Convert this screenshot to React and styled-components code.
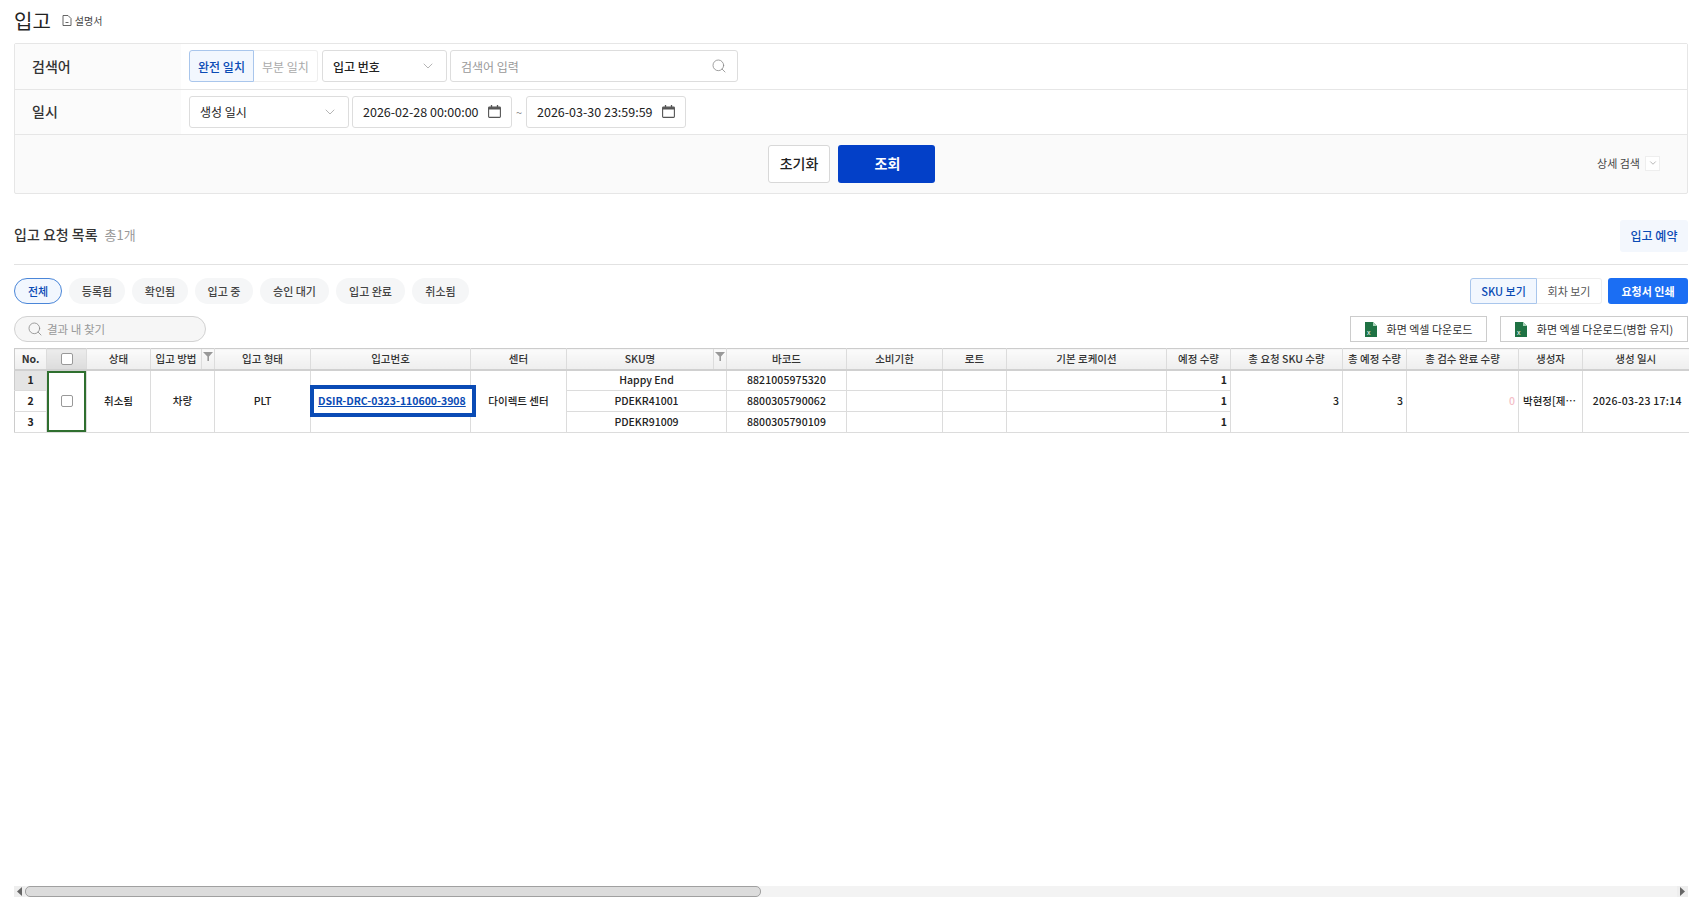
import React from "react";
import styled, { createGlobalStyle } from "styled-components";
import { ChevronDown, Search } from "lucide-react";

const Global = createGlobalStyle`
  html, body { margin: 0; padding: 0; background: #fff; height: 100%; overflow: hidden; }
  * { box-sizing: border-box; }
  body { font-family: "Noto Sans CJK KR", "Noto Sans", sans-serif; color: #222; }
`;

const Page = styled.div`
  height: 901px; width: 1696px; padding: 0 8px 4px 14px;
  display: flex; flex-direction: column;
`;
const TitleRow = styled.div`height: 43px; display: flex; align-items: center; gap: 11px; padding-bottom: 2px;`;
const Title = styled.h1`margin: 0; font-size: 20px; font-weight: 400; color: #222; line-height: 1;`;
const Manual = styled.span`display: flex; align-items: center; gap: 3px; font-size: 10px; color: #444;`;

const Panel = styled.section`border: 1px solid #e6e6e6; border-radius: 2px; height: 151px; display: flex; flex-direction: column; background: #fafafa;`;
const FilterRow = styled.div`height: 45.5px; display: flex; background: #fff; border-bottom: 1px solid #e6e6e6;`;
const FilterLabel = styled.div`width: 166px; padding: 0 0 1px 17px; background: #fbfbfb; display: flex; align-items: center; font-size: 14px; font-weight: 500; color: #333;`;
const FilterBody = styled.div`display: flex; align-items: center; padding-left: 8px; gap: 3px;`;
const Seg = styled.div`display: flex; margin-right: 1px;`;
const SegBtn = styled.div`
  width: ${p => p.$w}px; height: 32px; display: flex; align-items: center; justify-content: center; font-size: 12px;
  ${p => p.$on ? "background:#f2f7fe;border:1px solid #a9c6ec;color:#0a4bb5;border-radius:3px 0 0 3px;font-weight:500;" : "background:#fff;border:1px solid #eee;border-left:0;color:#aaa;border-radius:0 3px 3px 0;"}
`;
const Field = styled.div`
  width: ${p => p.$w}px; height: 32px; border: 1px solid #ddd; border-radius: 3px; background: #fff;
  display: flex; align-items: center; justify-content: space-between; padding: 0 10px; font-size: 12px; color: ${p => p.$muted ? "#999" : "#222"};
  font-weight: ${p => p.$bold ? 500 : 400};
`;
const DateField = styled(Field)`font-size: 12.5px; padding: 0 10px 0 10px;`;
const Tilde = styled.span`font-size: 11px; color: #888; width: 8px; text-align: center;`;
const ActionRow = styled.div`flex: 1; display: flex; align-items: center; justify-content: center; gap: 8px; position: relative; padding-left: 1px;`;
const ResetBtn = styled.button`width: 62px; height: 38px; padding: 0 0 2px; background: #fff; border: 1px solid #d8d8d8; border-radius: 3px; font: 500 14px "Noto Sans CJK KR", sans-serif; color: #222;`;
const QueryBtn = styled.button`width: 97px; height: 38px; padding: 0 0 2px 2px; background: #0340c8; border: 0; border-radius: 3px; font: 700 14px "Noto Sans CJK KR", sans-serif; color: #fff;`;
const Detail = styled.div`position: absolute; right: 27px; top: 20px; display: flex; align-items: center; gap: 5px; font-size: 11px; color: #444;`;
const DetailBox = styled.span`width: 15px; height: 15px; border: 1px solid #eee; display: flex; align-items: center; justify-content: center;background:#fff;`;

const ListHead = styled.div`height: 45px; margin-top: 26px; border-bottom: 1px solid #e2e2e2; display: flex; align-items: flex-start; justify-content: space-between;`;
const ListTitle = styled.div`font-size: 14px; font-weight: 500; color: #333; display: flex; gap: 7px; align-items: baseline; padding-top: 4px;`;
const Count = styled.span`font-size: 13px; color: #999; font-weight: 400;`;
const ReserveBtn = styled.div`width: 68px; height: 32px; padding-bottom: 2px; background: #f3f7fd; border-radius: 3px; color: #0a4bb5; font-size: 12px; font-weight: 500; display: flex; align-items: center; justify-content: center;`;

const ChipRow = styled.div`margin-top: 13px; height: 26px; display: flex; justify-content: space-between;`;
const Chips = styled.div`display: flex; gap: 7px;`;
const Chip = styled.div`
  width: ${p => p.$w}px; height: 26px; border-radius: 13px; font-size: 11px; display: flex; align-items: center; justify-content: center; font-weight: 500;
  ${p => p.$on ? "background:#f2f7fe;border:1px solid #4a86d8;color:#0a4bb5;" : "background:#f5f6f7;color:#444;"}
`;
const Views = styled.div`display: flex;`;
const ViewBtn = styled.div`
  width: ${p => p.$w}px; height: 26px; display: flex; align-items: center; justify-content: center; font-size: 11px;
  ${p => p.$on ? "background:#f2f7fe;border:1px solid #a9c6ec;color:#0a4bb5;border-radius:3px 0 0 3px;font-weight:500;" : "background:#fff;border:1px solid #eee;border-left:0;color:#555;border-radius:0 3px 3px 0;"}
`;
const PrintBtn = styled.div`margin-left: 6px; width: 80px; height: 26px; background: #1b6ef3; color: #fff; border-radius: 3px; font-size: 11px; font-weight: 700; display: flex; align-items: center; justify-content: center;`;

const ToolRow = styled.div`margin-top: 12px; height: 26px; display: flex; justify-content: space-between;`;
const SearchPill = styled.div`width: 192px; height: 26px; border: 1px solid #d2d2d2; border-radius: 13px; background: #f6f6f6; display: flex; align-items: center; gap: 4px; padding-left: 12px; font-size: 11.5px; color: #999;`;
const Downloads = styled.div`display: flex; gap: 13px;`;
const DownloadBtn = styled.div`width: ${p => p.$w}px; height: 26px; border: 1px solid #ccc; background: #fff; display: flex; align-items: center; justify-content: center; gap: 10px; font-size: 11px; color: #333;`;

const TableArea = styled.div`flex: 1; margin-top: 6px;`;
const Grid = styled.table`
  width: 1674px; table-layout: fixed; border-collapse: collapse; font-size: 10.5px; font-weight: 500; color: #222;
  border-top: 1px solid #ccc; border-left: 1px solid #ccc;
`;
const Th = styled.th`
  height: 21px; padding: 0 ${p => p.$filter ? "13px" : "0"} 0 0; font-weight: ${p => p.$bold ? 700 : 500}; text-align: center; position: relative; color: #333;
  border-right: ${p => p.$end ? "0" : "1px solid #dcdcdc"}; border-bottom: 2px solid #d0d0d0;
  background: ${p => p.$active ? "linear-gradient(#ececec,#dcdcdc)" : "linear-gradient(#fbfbfb,#eeeeee)"};
`;
const Td = styled.td`
  height: 21px; padding: 0 ${p => p.$right ? "3px" : "4px"} 1px; text-align: ${p => p.$right ? "right" : "center"};
  border-right: ${p => p.$end ? "0" : "1px solid #dcdcdc"}; border-bottom: 1px solid #dcdcdc; background: ${p => p.$head ? "#e4e4e4" : "#fff"};
  font-weight: ${p => p.$num ? 700 : 500}; position: relative; white-space: nowrap;
`;
const GreenCell = styled(Td)`padding: 0; box-shadow: inset 0 0 0 2px #2f6f2f;`;
const LinkCell = styled(Td)`padding: 0 0 1px 3px; text-align: left;`;
const BarcodeCell = styled(Td)`letter-spacing: 0.1px;`;
const DateCell = styled(Td)`letter-spacing: 0.25px; padding-left: 7px;`;
const Box = styled.span`display: block; width: 12px; height: 12px; margin: 0 auto; border: 1px solid #999; border-radius: 2px; background: #fff;`;
const Link = styled.a`display: inline-block; padding: 0 6px 0 4px; outline: 4px solid #0a4bb5; color: #0a4bb5; text-decoration: underline; font-weight: 700; font-size: 10.5px; line-height: 24px; position: relative; z-index: 2; background: #fff;`;
const FilterMark = styled.span`position: absolute; right: 0; top: 0; bottom: 0; width: 13px; border-left: 1px solid #dcdcdc; display: flex; justify-content: center; padding-top: 3px;`;
const Pink = styled.span`color: #f4c0c8;`;
const Trunc = styled.div`text-align: left;`;

const Scroll = styled.div`height: 11px; width: 1674px; background: #f3f3f3; display: flex; align-items: stretch; justify-content: space-between;`;
const Arrow = styled.div`width: 11px; background: #eee; display: flex; align-items: center; justify-content: center;`;
const Thumb = styled.div`width: 736px; background: #dcdcdc; border: 1px solid #a0a0a0; border-radius: 5px; margin-right: auto;`;

const widths = [32, 40, 64, 64, 96, 160, 96, 160, 120, 96, 64, 160, 64, 112, 64, 112, 64, 106];
const heads = ["No.", "", "상태", "입고 방법", "입고 형태", "입고번호", "센터", "SKU명", "바코드", "소비기한", "로트", "기본 로케이션", "예정 수량", "총 요청 SKU 수량", "총 예정 수량", "총 검수 완료 수량", "생성자", "생성 일시"];

const FilterIcon = () => (
  <svg width="10" height="9" viewBox="0 0 10 9"><path d="M0 0h10L6 4.5V9H4.4V4.5z" fill="#999" /></svg>
);
const XlsIcon = () => (
  <svg width="12" height="15" viewBox="0 0 12 15"><path d="M0 0h8l4 4v11H0z" fill="#1f7244" /><path d="M8 0l4 4H8z" fill="#a9d3b9" /><text x="2" y="12.5" fontSize="7" fill="#fff" fontFamily="Liberation Sans">x</text></svg>
);
const DocIcon = () => (
  <svg width="10" height="11" viewBox="0 0 10 11" fill="none" stroke="#555" strokeWidth="0.9"><path d="M1 .5h5l3 3v7H1z" /><path d="M3.5 7.5h3" /></svg>
);
const CalIcon = () => (
  <svg width="13" height="13" viewBox="0 0 13 13" fill="none"><rect x="0.6" y="2.1" width="11.8" height="10.3" rx="0.8" stroke="#555" strokeWidth="1.1" /><path d="M0.6 2.2h11.8v2.3H0.6z" fill="#555" /><path d="M3.5 0v2.5M9.5 0v2.5" stroke="#555" strokeWidth="1.3" /></svg>
);

export default function App() {
  return (
    <Page>
      <Global />
      <TitleRow><Title>입고</Title><Manual><DocIcon />설명서</Manual></TitleRow>
      <Panel>
        <FilterRow>
          <FilterLabel>검색어</FilterLabel>
          <FilterBody>
            <Seg><SegBtn $on $w={65}>완전 일치</SegBtn><SegBtn $w={64}>부분 일치</SegBtn></Seg>
            <Field $w={125} $bold>입고 번호<ChevronDown size={16} color="#999" strokeWidth={1.1} /></Field>
            <Field $w={288} $muted>검색어 입력<Search size={16} color="#888" strokeWidth={1.2} /></Field>
          </FilterBody>
        </FilterRow>
        <FilterRow>
          <FilterLabel>일시</FilterLabel>
          <FilterBody>
            <Field $w={160}>생성 일시<ChevronDown size={16} color="#999" strokeWidth={1.1} /></Field>
            <DateField $w={160}>2026-02-28 00:00:00<CalIcon /></DateField>
            <Tilde>~</Tilde>
            <DateField $w={160}>2026-03-30 23:59:59<CalIcon /></DateField>
          </FilterBody>
        </FilterRow>
        <ActionRow>
          <ResetBtn>초기화</ResetBtn>
          <QueryBtn>조회</QueryBtn>
          <Detail>상세 검색<DetailBox><ChevronDown size={10} color="#aaa" /></DetailBox></Detail>
        </ActionRow>
      </Panel>

      <ListHead>
        <ListTitle>입고 요청 목록<Count>총1개</Count></ListTitle>
        <ReserveBtn>입고 예약</ReserveBtn>
      </ListHead>

      <ChipRow>
        <Chips>
          <Chip $on $w={48}>전체</Chip>
          <Chip $w={56}>등록됨</Chip>
          <Chip $w={56}>확인됨</Chip>
          <Chip $w={58}>입고 중</Chip>
          <Chip $w={69}>승인 대기</Chip>
          <Chip $w={69}>입고 완료</Chip>
          <Chip $w={57}>취소됨</Chip>
        </Chips>
        <Views>
          <ViewBtn $on $w={67}>SKU 보기</ViewBtn>
          <ViewBtn $w={65}>회차 보기</ViewBtn>
          <PrintBtn>요청서 인쇄</PrintBtn>
        </Views>
      </ChipRow>

      <ToolRow>
        <SearchPill><Search size={16} color="#888" strokeWidth={1.2} />결과 내 찾기</SearchPill>
        <Downloads>
          <DownloadBtn $w={137}><XlsIcon />화면 엑셀 다운로드</DownloadBtn>
          <DownloadBtn $w={188}><XlsIcon />화면 엑셀 다운로드(병합 유지)</DownloadBtn>
        </Downloads>
      </ToolRow>

      <TableArea>
        <Grid>
          <colgroup>{widths.map((w, i) => <col key={i} style={{ width: w }} />)}</colgroup>
          <thead>
            <tr>
              {heads.map((h, i) => (
                <Th key={i} $active={i === 1} $bold={i === 0} $end={i === heads.length - 1} $filter={i === 3 || i === 7}>
                  {i === 1 ? <Box /> : h}
                  {(i === 3 || i === 7) && <FilterMark><FilterIcon /></FilterMark>}
                </Th>
              ))}
            </tr>
          </thead>
          <tbody>
            <tr>
              <Td $head $num>1</Td>
              <GreenCell rowSpan={3}><Box /></GreenCell>
              <Td rowSpan={3}>취소됨</Td>
              <Td rowSpan={3}>차량</Td>
              <Td rowSpan={3}>PLT</Td>
              <LinkCell rowSpan={3}><Link>DSIR-DRC-0323-110600-3908</Link></LinkCell>
              <Td rowSpan={3}>다이렉트 센터</Td>
              <Td>Happy End</Td>
              <BarcodeCell>8821005975320</BarcodeCell>
              <Td /><Td /><Td />
              <Td $right $num>1</Td>
              <Td rowSpan={3} $right>3</Td>
              <Td rowSpan={3} $right>3</Td>
              <Td rowSpan={3} $right><Pink>0</Pink></Td>
              <Td rowSpan={3}><Trunc>박현정[제…</Trunc></Td>
              <DateCell rowSpan={3} $end>2026-03-23 17:14</DateCell>
            </tr>
            <tr>
              <Td $num>2</Td>
              <Td>PDEKR41001</Td>
              <BarcodeCell>8800305790062</BarcodeCell>
              <Td /><Td /><Td />
              <Td $right $num>1</Td>
            </tr>
            <tr>
              <Td $num>3</Td>
              <Td>PDEKR91009</Td>
              <BarcodeCell>8800305790109</BarcodeCell>
              <Td /><Td /><Td />
              <Td $right $num>1</Td>
            </tr>
          </tbody>
        </Grid>
      </TableArea>

      <Scroll>
        <Arrow><svg width="5" height="9" viewBox="0 0 5 9"><path d="M5 0v9L0 4.5z" fill="#666" /></svg></Arrow>
        <Thumb />
        <Arrow><svg width="5" height="9" viewBox="0 0 5 9"><path d="M0 0v9l5-4.5z" fill="#666" /></svg></Arrow>
      </Scroll>
    </Page>
  );
}
